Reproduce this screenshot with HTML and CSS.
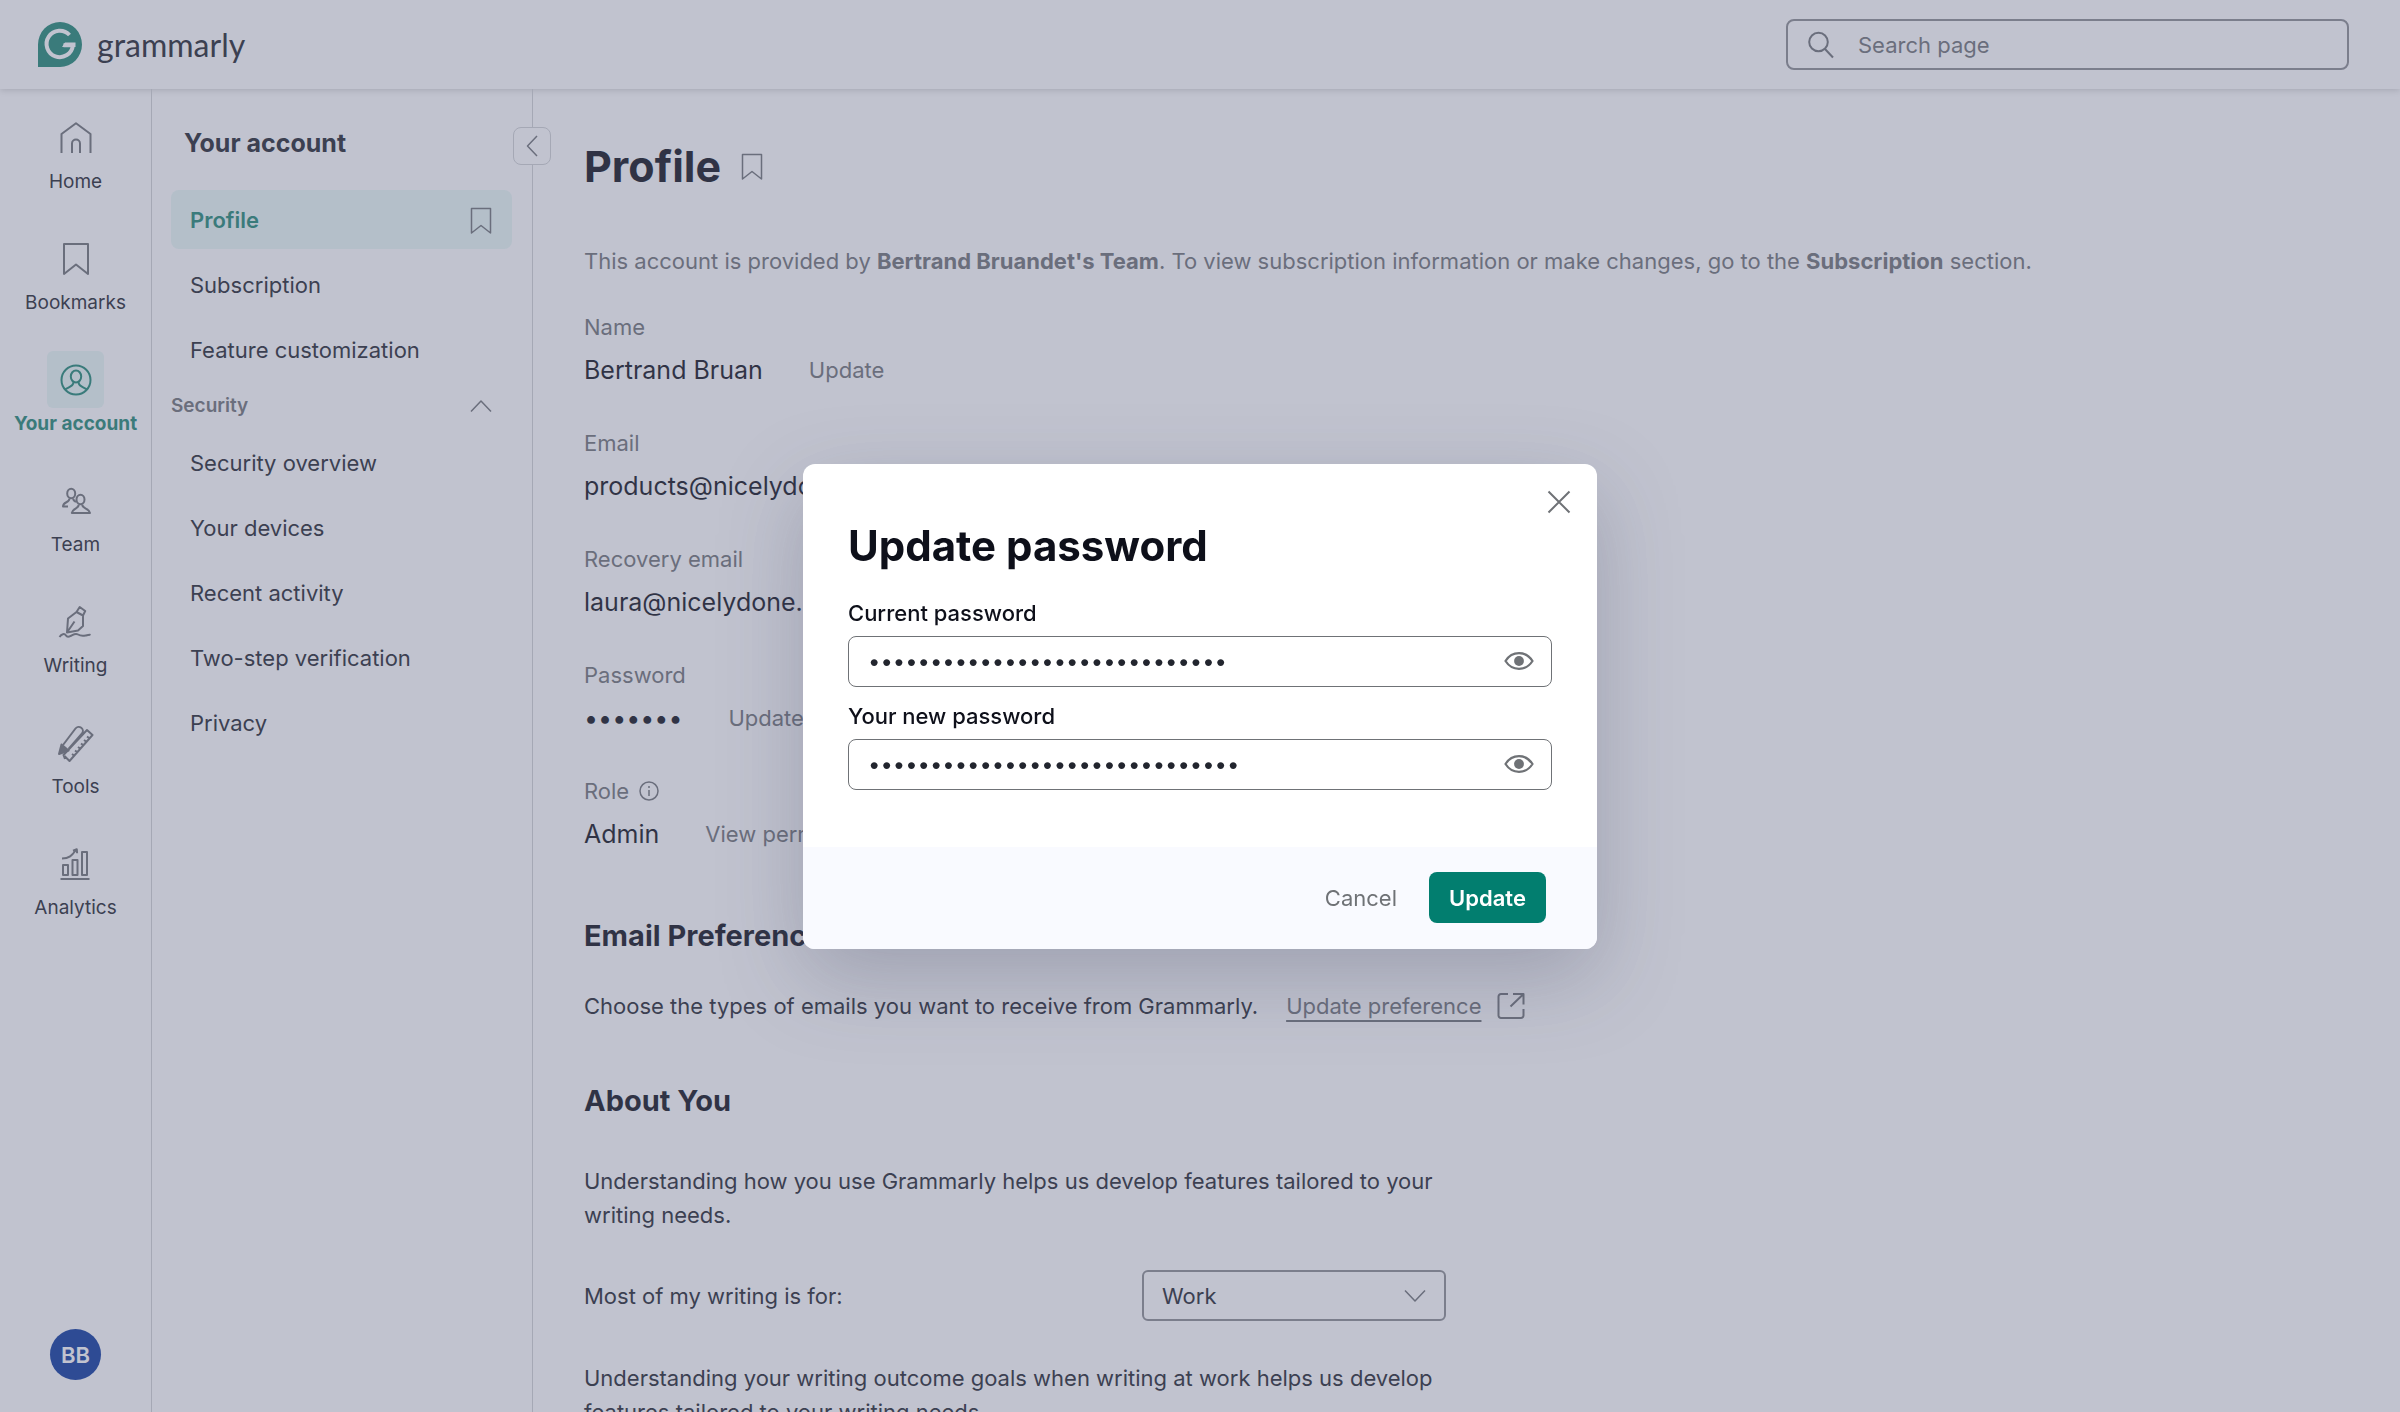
FILE: index.html
```html
<!DOCTYPE html>
<html lang="en">
<head>
  <meta charset="UTF-8" />
  <meta name="viewport" content="width=device-width, initial-scale=1.0"/>
  <title>Profile</title>
  <link rel="stylesheet" href="styles.css">
</head>
<body>
  <div class="app">
    <header class="topbar">
      <a class="logo" href="#">
        <svg width="44" height="45" viewBox="0 0 44 45">
          <path fill="#1f8773" d="M22 0a22 22.500 0 0 1 0 45H0V22.500A22 22.500 0 0 1 22 0z"/>
          <path fill="none" stroke="#fff" stroke-width="4" d="M31.500 13a13.200 13.200 0 1 0 3.400 10.200H25.500"/>
          <path fill="#fff" d="M27 20.500h10.500v4.500H24z"/>
        </svg>
        <span>grammarly</span>
      </a>
      <label class="search">
        <svg class="icon" width="26" height="28" viewBox="0 0 26 28"><circle cx="10.500" cy="11" r="9.300"/><path d="M17 18l8 8.500"/></svg>
        <input type="search" placeholder="Search page" aria-label="Search page">
      </label>
    </header>

    <div class="columns">
      <nav class="rail">
        <a href="#">
          <span class="pic"><svg class="icon" width="34" height="34" viewBox="0 0 34 34"><path d="M2.500 32V13L17 2.200 31.500 13v19M13 32V22.500a4 4 0 0 1 8 0V32"/></svg></span>
          Home
        </a>
        <a href="#">
          <span class="pic"><svg class="icon" width="34" height="34" viewBox="0 0 34 34"><path d="M5 2h24v30l-12-9.500L5 32z"/></svg></span>
          Bookmarks
        </a>
        <a href="#" class="active">
          <span class="pic"><svg class="icon" width="34" height="34" viewBox="0 0 34 34"><circle cx="17" cy="17" r="14.500"/><ellipse cx="17" cy="13.500" rx="5.200" ry="6"/><path d="M14.500 19c0 4-3 4.300-8.500 7.500M19.500 19c0 4 3 4.300 8.500 7.500"/></svg></span>
          Your account
        </a>
        <a href="#">
          <span class="pic"><svg class="icon" width="34" height="34" viewBox="0 0 34 34"><ellipse cx="12.200" cy="9.500" rx="4" ry="4.800"/><ellipse cx="21.500" cy="15.500" rx="4" ry="4.800"/><path d="M10.500 14.500c0 4.500-6.500 3-6.500 8h5M14 14.500c.3 2 1.500 2.500 3 3.500M19.800 20.500c0 4.500-6.300 3.500-7 8.500H31c-.7-5-7.800-4-7.800-8.500"/></svg></span>
          Team
        </a>
        <a href="#">
          <span class="pic"><svg class="icon" width="34" height="34" viewBox="0 0 34 34"><path d="M9 27.500L10 13.500l8.500-6.500 6.500 3.500v10.500l-5 4.500L9 27.500l7.500-11M18.500 7l3.200-5 5.500 4-2.200 4.500M1.500 32c2-3 5-4 6.500-1.500s3.500 1 5.500 0 4-2.500 6.500-1 5 1.500 7.500 1 4-1 5-.5"/></svg></span>
          Writing
        </a>
        <a href="#">
          <span class="pic"><svg class="icon" width="36" height="38" viewBox="0 0 36 38"><path d="M5 21L17.500 4.500a4 4 0 0 1 6.500 5L10.500 25M7 35l-1.500-4L29 6l5.500 5L11.500 37 6.500 32M14 30l2 1.500M17 26.500l2 1.500M20 23l2 1.500M23 19.500l2 1.500M26 16l2 1.500M29 12.500l2 1.500"/><path class="solid" d="M1 30l2.500-9.500 7 6z"/></svg></span>
          Tools
        </a>
        <a href="#">
          <span class="pic"><svg class="icon" width="34" height="34" viewBox="0 0 34 34"><path d="M2.500 32h29M5 18h5v10H5zM14.500 13h5v15h-5zM24 5h5v23h-5zM4 11.500c7 0 10-3 14-8.500M15 3.800l3.800-1.500.3 4"/></svg></span>
          Analytics
        </a>
        <button class="avatar">BB</button>
      </nav>

      <aside class="subnav">
        <button class="collapse" aria-label="Collapse menu">
          <svg class="icon thin" width="14" height="24" viewBox="0 0 14 24"><path d="M12 2L2.500 12 12 22"/></svg>
        </button>
        <h2>Your account</h2>
        <nav>
          <a href="#" class="active">Profile
            <svg class="icon thin" width="22" height="28" viewBox="0 0 22 28"><path d="M1.500 2.500h19v24.500L11 19.500 1.500 27z"/></svg>
          </a>
          <a href="#">Subscription</a>
          <a href="#">Feature customization</a>
        </nav>
        <button class="group">Security
          <svg class="icon thin" width="22" height="14" viewBox="0 0 22 14"><path d="M1 12.500L11 2l10 10.500"/></svg>
        </button>
        <nav>
          <a href="#">Security overview</a>
          <a href="#">Your devices</a>
          <a href="#">Recent activity</a>
          <a href="#">Two-step verification</a>
          <a href="#">Privacy</a>
        </nav>
      </aside>

      <main class="content">
        <div class="title">
          <h1>Profile</h1>
          <svg class="icon thin" width="22" height="28" viewBox="0 0 22 28"><path d="M1.500 2.500h19v24.500L11 19.500 1.500 27z"/></svg>
        </div>
        <p class="provided">This account is provided by <b>Bertrand Bruandet's Team</b>. To view subscription information or make changes, go to the <b>Subscription</b> section.</p>

        <div class="fields">
          <div class="field">
            <div class="name">Name</div>
            <div class="value">Bertrand Bruan <a href="#">Update</a></div>
          </div>
          <div class="field">
            <div class="name">Email</div>
            <div class="value">products@nicelydone.club <a href="#">Update</a></div>
          </div>
          <div class="field">
            <div class="name">Recovery email</div>
            <div class="value">laura@nicelydone.club</div>
          </div>
          <div class="field">
            <div class="name">Password</div>
            <div class="value"><span>•••••••</span> <a href="#">Update</a></div>
          </div>
          <div class="field">
            <div class="name">Role
              <svg class="icon thin" width="20" height="20" viewBox="0 0 20 20"><circle cx="10" cy="10" r="9"/><path d="M10 9v6M10 5v2"/></svg>
            </div>
            <div class="value">Admin <a href="#">View permissions</a></div>
          </div>
        </div>

        <h3 class="email-title">Email Preferences</h3>
        <div class="emails">
          <span>Choose the types of emails you want to receive from Grammarly.</span>
          <a href="#">Update preference</a>
          <svg class="icon" width="28" height="28" viewBox="0 0 28 28"><path d="M11 2H4a2.500 2.500 0 0 0-2.500 2.500v19A2.500 2.500 0 0 0 4 26h20a2.500 2.500 0 0 0 2.500-2.500V17M16 2h10.500v10.500M26 2.500L13.500 14.500"/></svg>
        </div>

        <h3 class="about-title">About You</h3>
        <div class="about">
          <p>Understanding how you use Grammarly helps us develop features tailored to your writing needs.</p>
          <div class="purpose">
            <label for="purpose">Most of my writing is for:</label>
            <div class="select">
              <select id="purpose"><option>Work</option><option>School</option></select>
              <svg class="icon thin" width="22" height="14" viewBox="0 0 22 14"><path d="M1 1.500L11 12 21 1.500"/></svg>
            </div>
          </div>
          <p>Understanding your writing outcome goals when writing at work helps us develop features tailored to your writing needs.</p>
        </div>
      </main>
    </div>
  </div>

  <div class="overlay">
    <form class="modal" role="dialog" aria-labelledby="modal-title">
      <button type="button" class="close" aria-label="Close">
        <svg class="icon" width="24" height="24" viewBox="0 0 24 24"><path d="M1.500 1.500l21 21M22.500 1.500l-21 21"/></svg>
      </button>
      <div class="modal-body">
        <h2 id="modal-title">Update password</h2>
        <label for="current">Current password</label>
        <div class="password">
          <input id="current" type="password" value="current-password-for-account1">
          <button type="button" aria-label="Show password">
            <svg width="30" height="18" viewBox="0 0 30 18"><path fill="none" stroke="#6f7276" stroke-width="2.200" d="M1.500 9C5 3.500 10 1.200 15 1.200S25 3.500 28.500 9C25 14.500 20 16.800 15 16.800S5 14.500 1.500 9z"/><circle cx="15" cy="9" r="4.900" fill="#6f7276"/></svg>
          </button>
        </div>
        <label for="new">Your new password</label>
        <div class="password">
          <input id="new" type="password" value="the-new-password-for-account12">
          <button type="button" aria-label="Show password">
            <svg width="30" height="18" viewBox="0 0 30 18"><path fill="none" stroke="#6f7276" stroke-width="2.200" d="M1.500 9C5 3.500 10 1.200 15 1.200S25 3.500 28.500 9C25 14.500 20 16.800 15 16.800S5 14.500 1.500 9z"/><circle cx="15" cy="9" r="4.900" fill="#6f7276"/></svg>
          </button>
        </div>
      </div>
      <div class="modal-footer">
        <button type="button" class="cancel">Cancel</button>
        <button type="submit" class="submit">Update</button>
      </div>
    </form>
  </div>
</body>
</html>
```
FILE: styles.css
```css
* {
  box-sizing: border-box;
}

body {
  margin: 0;
  font-family: Inter, sans-serif;
  font-size: 22px;
  line-height: 34px;
  color: #22252e;
  background: #fff;
}

h1, h2, h3, p {
  margin: 0;
}

a {
  color: inherit;
  text-decoration: none;
}

button, input, select {
  font: inherit;
  color: inherit;
}

button {
  padding: 0;
  border: none;
  background: none;
  cursor: pointer;
}

svg {
  flex: none;
  display: block;
}

.icon {
  fill: none;
  stroke: #6f7276;
  stroke-width: 2;
  stroke-linejoin: round;
}

.icon.thin {
  stroke-width: 1.5;
}

.icon .solid {
  fill: #6f7276;
}

.app {
  display: flex;
  flex-direction: column;
  height: 100vh;
  overflow: hidden;
}

/* Top bar */
.topbar {
  display: flex;
  justify-content: space-between;
  align-items: center;
  height: 89px;
  padding: 0 51px 0 38px;
  box-shadow: 0 1px 7px rgba(0, 0, 0, 0.2);
}

.logo {
  display: flex;
  align-items: center;
  gap: 15px;
  font-family: Lato, sans-serif;
  font-size: 32px;
}

.search {
  display: flex;
  align-items: center;
  gap: 24px;
  width: 563px;
  height: 51px;
  padding: 0 20px;
  border: 2px solid #8a8c90;
  border-radius: 8px;
}

.search input {
  flex: 1;
  min-width: 0;
  padding: 0;
  border: none;
  outline: none;
  background: none;
}

.search input::placeholder {
  color: #6f7276;
}

.columns {
  display: flex;
  flex: 1;
  min-height: 0;
}

/* Icon rail */
.rail {
  display: flex;
  flex-direction: column;
  align-items: center;
  gap: 36px;
  width: 152px;
  padding: 20px 0 32px;
  border-right: 1px solid #d0d2d4;
  font-size: 19px;
  line-height: 24px;
}

.rail a {
  display: flex;
  flex-direction: column;
  align-items: center;
  gap: 4px;
}

.pic {
  display: flex;
  justify-content: center;
  align-items: center;
  width: 57px;
  height: 57px;
  border-radius: 6px;
}

.rail .active {
  font-weight: 700;
  color: #1f8773;
}

.rail .active .pic {
  background: #e9f9f6;
}

.rail .active .icon {
  stroke: #1f8773;
}

.avatar {
  width: 51px;
  height: 51px;
  margin-top: auto;
  border-radius: 50%;
  background: #0a379d;
  color: #fff;
  font-size: 22px;
  font-weight: 600;
}

/* Section menu */
.subnav {
  position: relative;
  width: 381px;
  padding: 37px 20px 0 19px;
  border-right: 1px solid #d0d2d4;
}

.subnav h2 {
  margin: 0 13px 30px;
  font-size: 25px;
}

.subnav nav {
  display: flex;
  flex-direction: column;
  gap: 6px;
}

.subnav a {
  display: flex;
  justify-content: space-between;
  align-items: center;
  height: 59px;
  padding: 0 20px 0 19px;
  border-radius: 8px;
}

.subnav .active {
  background: #e9f9f6;
  color: #1f8773;
  font-weight: 600;
}

.group {
  display: flex;
  justify-content: space-between;
  align-items: center;
  width: 100%;
  height: 54px;
  padding-right: 20px;
  font-size: 19px;
  font-weight: 600;
  color: #6f7276;
}

.collapse {
  position: absolute;
  top: 38px;
  right: -19px;
  display: flex;
  justify-content: center;
  align-items: center;
  width: 38px;
  height: 38px;
  border: 1px solid #d0d2d4;
  border-radius: 8px;
  background: #fff;
}

/* Profile */
.content {
  flex: 1;
  min-width: 0;
  padding: 52px 51px 0;
  overflow: hidden;
}

.title {
  display: flex;
  align-items: center;
  gap: 20px;
}

h1 {
  font-size: 43px;
  line-height: 50px;
  color: #0e101a;
}

.provided {
  margin: 53px 0 32px;
  color: #6f7276;
}

.fields {
  display: flex;
  flex-direction: column;
  gap: 37px;
}

.name {
  display: flex;
  align-items: center;
  gap: 10px;
  margin-bottom: 7px;
  color: #6f7276;
}

.value {
  display: flex;
  align-items: center;
  gap: 46px;
  font-size: 25px;
  line-height: 38px;
  color: #0e101a;
}

.value a {
  font-size: 22px;
  color: #6f7276;
}

h3 {
  font-size: 29px;
  color: #0e101a;
}

.email-title {
  margin: 66px 0 36px;
}

.emails {
  display: flex;
  align-items: center;
}

.emails a {
  margin: 0 16px 0 28px;
  color: #6f7276;
  text-decoration: underline;
  text-decoration-thickness: 2px;
  text-underline-offset: 6px;
}

.about-title {
  margin: 61px 0 46px;
}

.about {
  max-width: 862px;
}

.purpose {
  display: flex;
  justify-content: space-between;
  align-items: center;
  margin: 38px 0 40px;
}

.select {
  display: grid;
  align-items: center;
  width: 304px;
}

.select select {
  grid-area: 1 / 1;
  height: 51px;
  padding: 0 18px;
  border: 2px solid #8a8c90;
  border-radius: 6px;
  background: none;
  appearance: none;
}

.select svg {
  grid-area: 1 / 1;
  justify-self: end;
  margin-right: 20px;
  pointer-events: none;
}

/* Update password dialog */
.overlay {
  position: fixed;
  inset: 0;
  display: flex;
  justify-content: center;
  align-items: center;
  background: rgba(100, 105, 135, 0.4);
}

.modal {
  position: relative;
  width: 794px;
  border-radius: 12px;
  overflow: hidden;
  background: #fff;
  box-shadow: 0 28px 84px rgba(50, 56, 84, 0.25);
}

.close {
  position: absolute;
  top: 26px;
  right: 26px;
}

.modal-body {
  padding: 57px 45px;
}

.modal h2 {
  margin-bottom: 25px;
  font-size: 42px;
  line-height: 50px;
  color: #0e101a;
}

.modal-body label {
  display: block;
  margin-bottom: 6px;
  font-weight: 500;
  color: #0e101a;
}

.password {
  display: flex;
  align-items: center;
  height: 51px;
  margin-bottom: 12px;
  padding: 0 17px 0 19px;
  border: 1px solid #6f7276;
  border-radius: 8px;
}

.password:last-child {
  margin-bottom: 0;
}

.password input {
  flex: 1;
  min-width: 0;
  padding: 0;
  border: none;
  outline: none;
  background: none;
}

.modal-footer {
  display: flex;
  justify-content: flex-end;
  align-items: center;
  gap: 32px;
  height: 102px;
  padding-right: 51px;
  background: #f9faff;
}

.cancel {
  color: #6f7276;
}

.submit {
  width: 117px;
  height: 51px;
  border-radius: 8px;
  background: #027e6f;
  color: #fff;
  font-weight: 600;
}
```
